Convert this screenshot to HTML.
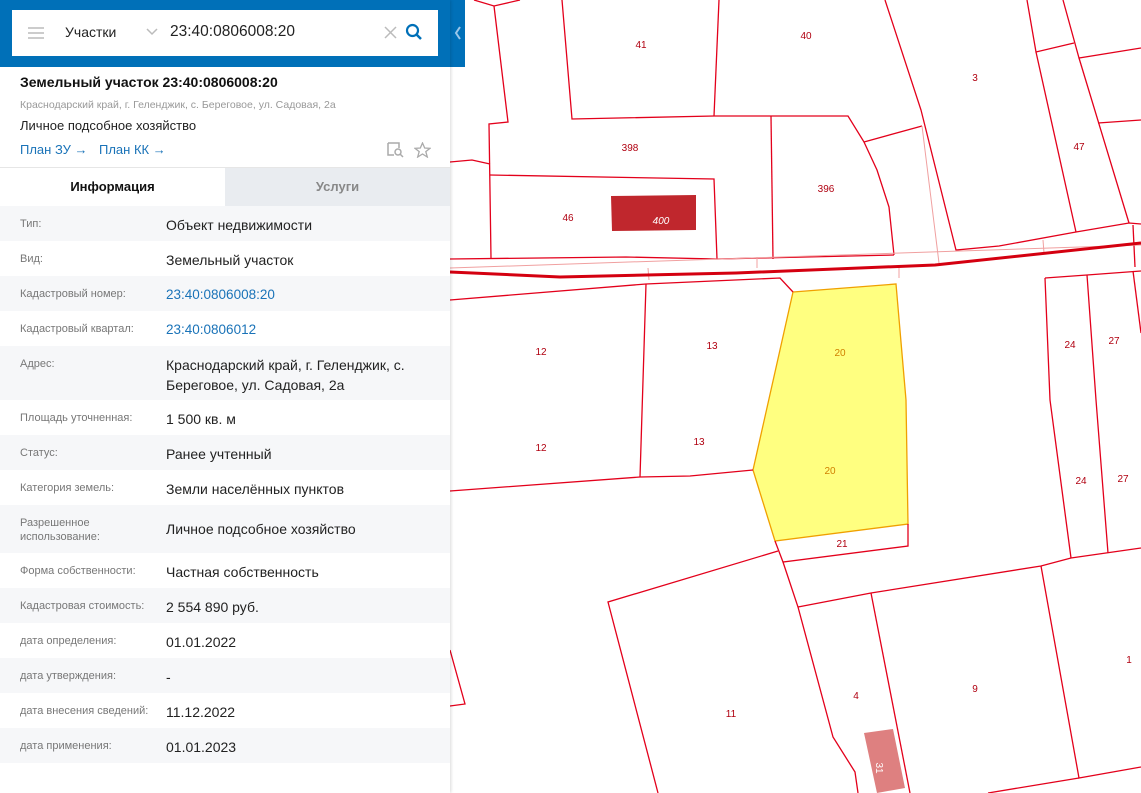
<!DOCTYPE html>
<html><head><meta charset="utf-8"><style>
*{box-sizing:border-box;margin:0;padding:0}
body{width:1141px;height:793px;overflow:hidden;background:#fff;font-family:"Liberation Sans",sans-serif;position:relative}
#map{position:absolute;left:0;top:0}
#panel{position:absolute;left:0;top:0;width:450px;height:793px;background:#fff;box-shadow:1px 0 3px rgba(0,0,0,.15)}
#hdr{height:67px;background:#0070b8;padding:10px 12px}
#sb{height:46px;background:#fff;position:relative;font-size:15px;color:#222}
.row{display:flex;height:35px;font-size:14px;color:#222}
.row.g{background:#f6f7f9}
.row .k{width:166px;padding-left:20px;padding-top:11px;font-size:11px;color:#777;line-height:14px}
.row .v{flex:1;padding-top:9px;line-height:20px}
.row .v.l{color:#1a73b8;font-size:13.5px}
#tab{position:absolute;left:450px;top:0;width:15px;height:67px;background:#0070b8}
</style></head><body>
<svg id="map" width="1141" height="793" viewBox="0 0 1141 793">
<g fill="none" stroke="#e3001b" stroke-width="1.3">
<polygon points="793,292 896,284 906,400 908,524 775,541 753,470" fill="#ffff80" stroke="#f0a000"/>
<polyline points="474,0 494,6 520,0"/>
<polyline points="494,6 508,122 489,124 491,258"/>
<polyline points="562,0 572,119 714,116 848,116 864,142 922,126"/>
<polyline points="719,0 714,116"/>
<polyline points="885,0 921,110 956,250 999,246 1076,232 1129,223 1141,224"/>
<polyline points="864,142 877,170 889,207 894,255"/>
<polyline points="490,175 714,179 717,259"/>
<polyline points="771,116 773,259"/>
<polyline points="450,259 626,257 717,259 894,255"/>
<polyline points="450,162 472,160 490,164"/>
<polyline points="1027,0 1036,52 1074,43"/>
<polyline points="1036,52 1076,232"/>
<polyline points="1063,0 1079,58 1141,48"/>
<polyline points="1079,58 1129,223"/>
<polyline points="1098,123 1141,120"/>
<polyline points="1133,225 1135,267"/>
<polyline points="450,268 1141,245" stroke="#f0a0a0" stroke-width="1"/>
<polyline points="922,126 939,263" stroke="#f0a0a0" stroke-width="1"/>
<polyline points="757,257 757,268" stroke="#f0a0a0" stroke-width="1"/>
<polyline points="648,268 649,280" stroke="#f0a0a0" stroke-width="1"/>
<polyline points="899,267 899,278" stroke="#f0a0a0" stroke-width="1"/>
<polyline points="1043,240 1044,253" stroke="#f0a0a0" stroke-width="1"/>
<polyline points="450,272 560,277 736,273 935,265 1141,243" stroke="#d40010" stroke-width="3"/>
<polyline points="450,300 646,284 780,278 793,292"/>
<polyline points="646,284 640,477"/>
<polyline points="450,491 640,477 690,476 753,470"/>
<polyline points="775,541 783,562 908,546 908,524"/>
<polyline points="778,551 608,602 658,793"/>
<polyline points="783,562 798,607 833,737 855,772 858,793"/>
<polyline points="798,607 871,593 1041,566 1071,558 1141,548"/>
<polyline points="871,593 910,793"/>
<polyline points="1041,566 1079,778 1141,767"/>
<polyline points="988,793 1079,778"/>
<polyline points="1045,278 1087,275 1141,271"/>
<polyline points="1045,278 1050,400 1071,558"/>
<polyline points="1087,275 1096,400 1108,553"/>
<polyline points="1133,271 1141,333"/>
<polyline points="450,650 465,704 450,706"/>
</g>
<polygon points="611,196 696,195 696,230 612,231" fill="#c0272d"/>
<polygon points="864,733 893,729 905,788 877,793" fill="#de8080"/>
<g font-family="Liberation Sans,sans-serif" font-size="10" fill="#b00010" text-anchor="middle">
<text x="641" y="48">41</text><text x="806" y="39">40</text><text x="975" y="81">3</text><text x="1079" y="150">47</text>
<text x="630" y="151">398</text><text x="826" y="192">396</text><text x="568" y="221">46</text>
<text x="661" y="224" fill="#fff" font-style="italic">400</text>
<text x="541" y="355">12</text><text x="712" y="349">13</text><text x="840" y="356" fill="#d08000">20</text>
<text x="1070" y="348">24</text><text x="1114" y="344">27</text>
<text x="541" y="451">12</text><text x="699" y="445">13</text><text x="830" y="474" fill="#d08000">20</text>
<text x="1081" y="484">24</text><text x="1123" y="482">27</text><text x="842" y="547">21</text>
<text x="856" y="699">4</text><text x="975" y="692">9</text><text x="731" y="717">11</text><text x="1129" y="663">1</text>
<text x="880" y="772" fill="#fff" transform="rotate(90 880 768)">31</text>
</g>
</svg>
<div id="tab"><svg width="15" height="67"><polyline points="10,27 6,33 10,39" fill="none" stroke="#9cc6e8" stroke-width="2"/></svg></div>
<div id="panel">
<div id="hdr"><div id="sb">
<svg style="position:absolute;left:16px;top:16px" width="16" height="14"><g stroke="#ccc" stroke-width="2"><line x1="0" y1="2" x2="16" y2="2"/><line x1="0" y1="7" x2="16" y2="7"/><line x1="0" y1="12" x2="16" y2="12"/></g></svg>
<span style="position:absolute;left:53px;top:14px;font-size:14px">Участки</span>
<svg style="position:absolute;left:134px;top:18px" width="12" height="8"><polyline points="1,1 6,6 11,1" fill="none" stroke="#bbb" stroke-width="1.5"/></svg>
<span style="position:absolute;left:158px;top:13px;font-size:15.5px">23:40:0806008:20</span>
<svg style="position:absolute;left:372px;top:16px" width="13" height="13"><g stroke="#bbb" stroke-width="1.5"><line x1="1" y1="1" x2="12" y2="12"/><line x1="12" y1="1" x2="1" y2="12"/></g></svg>
<svg style="position:absolute;left:393px;top:13px" width="18" height="18"><circle cx="7.5" cy="7.5" r="5.5" fill="none" stroke="#0070b8" stroke-width="2.2"/><line x1="11.5" y1="11.5" x2="16" y2="16" stroke="#0070b8" stroke-width="2.5"/></svg>
</div></div>
<div style="position:absolute;left:20px;top:74px;font-size:14px;font-weight:bold;color:#111">Земельный участок 23:40:0806008:20</div>
<div style="position:absolute;left:20px;top:99px;font-size:10.5px;color:#999">Краснодарский край, г. Геленджик, с. Береговое, ул. Садовая, 2а</div>
<div style="position:absolute;left:20px;top:118px;font-size:13px;color:#222">Личное подсобное хозяйство</div>
<div style="position:absolute;left:20px;top:142px;font-size:13px;color:#1a73b8">План ЗУ →</div>
<div style="position:absolute;left:99px;top:142px;font-size:13px;color:#1a73b8">План КК →</div>
<svg style="position:absolute;left:387px;top:142px" width="18" height="16"><path d="M1 1h11v5M1 1v12h6" fill="none" stroke="#aaa" stroke-width="1.5"/><circle cx="11" cy="10" r="3" fill="none" stroke="#aaa" stroke-width="1.5"/><line x1="13" y1="12" x2="16" y2="15" stroke="#aaa" stroke-width="1.5"/></svg>
<svg style="position:absolute;left:414px;top:142px" width="17" height="16"><polygon points="8.5,1 10.7,6 16,6.3 11.8,9.6 13.3,15 8.5,12 3.7,15 5.2,9.6 1,6.3 6.3,6" fill="none" stroke="#aaa" stroke-width="1.3"/></svg>
<div style="position:absolute;left:0;top:167px;width:450px;height:1px;background:#e6e6e6"></div>
<div style="position:absolute;left:0;top:168px;width:225px;height:38px;text-align:center;line-height:38px;font-size:13px;font-weight:bold;color:#111">Информация</div>
<div style="position:absolute;left:225px;top:168px;width:225px;height:38px;background:#e9ecf0;text-align:center;line-height:38px;font-size:13px;font-weight:bold;color:#888">Услуги</div>
<div style="position:absolute;left:0;top:206px;width:450px">
<div class="row g"><div class="k">Тип:</div><div class="v">Объект недвижимости</div></div>
<div class="row"><div class="k">Вид:</div><div class="v">Земельный участок</div></div>
<div class="row g"><div class="k">Кадастровый номер:</div><div class="v l">23:40:0806008:20</div></div>
<div class="row"><div class="k">Кадастровый квартал:</div><div class="v l">23:40:0806012</div></div>
<div class="row g" style="height:54px"><div class="k">Адрес:</div><div class="v">Краснодарский край, г. Геленджик, с. Береговое, ул. Садовая, 2а</div></div>
<div class="row"><div class="k">Площадь уточненная:</div><div class="v">1 500 кв. м</div></div>
<div class="row g"><div class="k">Статус:</div><div class="v">Ранее учтенный</div></div>
<div class="row"><div class="k">Категория земель:</div><div class="v">Земли населённых пунктов</div></div>
<div class="row g" style="height:48px"><div class="k">Разрешенное использование:</div><div class="v" style="padding-top:14px">Личное подсобное хозяйство</div></div>
<div class="row"><div class="k">Форма собственности:</div><div class="v">Частная собственность</div></div>
<div class="row g"><div class="k">Кадастровая стоимость:</div><div class="v">2 554 890 руб.</div></div>
<div class="row"><div class="k">дата определения:</div><div class="v">01.01.2022</div></div>
<div class="row g"><div class="k">дата утверждения:</div><div class="v">-</div></div>
<div class="row"><div class="k">дата внесения сведений:</div><div class="v">11.12.2022</div></div>
<div class="row g"><div class="k">дата применения:</div><div class="v">01.01.2023</div></div>
</div>
</div>
</body></html>
